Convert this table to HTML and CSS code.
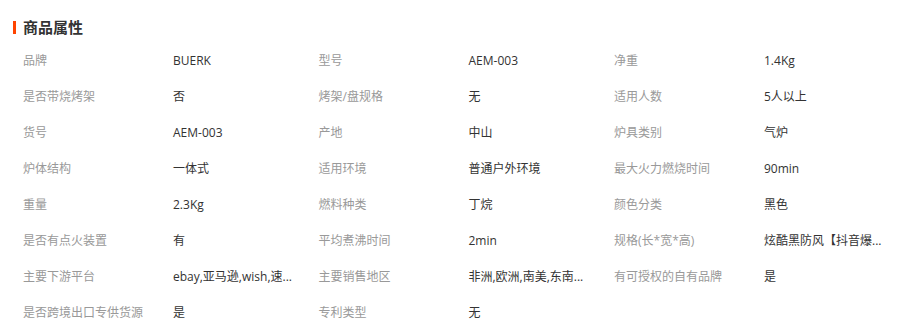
FILE: index.html
```html
<!DOCTYPE html>
<html lang="zh-CN">
<head>
<meta charset="utf-8">
<title>商品属性</title>
<link rel="stylesheet" href="styles.css">
</head>
<body>
<section class="attrs">
  <h2 class="attrs-title"><span class="attrs-bar"></span>商品属性</h2>
  <ul class="attrs-list">
    <li class="attr"><span class="attr-name">品牌</span><span class="attr-value">BUERK</span></li>
    <li class="attr"><span class="attr-name">型号</span><span class="attr-value">AEM-003</span></li>
    <li class="attr"><span class="attr-name">净重</span><span class="attr-value">1.4Kg</span></li>
    <li class="attr"><span class="attr-name">是否带烧烤架</span><span class="attr-value">否</span></li>
    <li class="attr"><span class="attr-name">烤架/盘规格</span><span class="attr-value">无</span></li>
    <li class="attr"><span class="attr-name">适用人数</span><span class="attr-value">5人以上</span></li>
    <li class="attr"><span class="attr-name">货号</span><span class="attr-value">AEM-003</span></li>
    <li class="attr"><span class="attr-name">产地</span><span class="attr-value">中山</span></li>
    <li class="attr"><span class="attr-name">炉具类别</span><span class="attr-value">气炉</span></li>
    <li class="attr"><span class="attr-name">炉体结构</span><span class="attr-value">一体式</span></li>
    <li class="attr"><span class="attr-name">适用环境</span><span class="attr-value">普通户外环境</span></li>
    <li class="attr"><span class="attr-name">最大火力燃烧时间</span><span class="attr-value">90min</span></li>
    <li class="attr"><span class="attr-name">重量</span><span class="attr-value">2.3Kg</span></li>
    <li class="attr"><span class="attr-name">燃料种类</span><span class="attr-value">丁烷</span></li>
    <li class="attr"><span class="attr-name">颜色分类</span><span class="attr-value">黑色</span></li>
    <li class="attr"><span class="attr-name">是否有点火装置</span><span class="attr-value">有</span></li>
    <li class="attr"><span class="attr-name">平均煮沸时间</span><span class="attr-value">2min</span></li>
    <li class="attr"><span class="attr-name">规格(长*宽*高)</span><span class="attr-value">炫酷黑防风【抖音爆...</span></li>
    <li class="attr"><span class="attr-name">主要下游平台</span><span class="attr-value">ebay,亚马逊,wish,速...</span></li>
    <li class="attr"><span class="attr-name">主要销售地区</span><span class="attr-value">非洲,欧洲,南美,东南...</span></li>
    <li class="attr"><span class="attr-name">有可授权的自有品牌</span><span class="attr-value">是</span></li>
    <li class="attr"><span class="attr-name">是否跨境出口专供货源</span><span class="attr-value">是</span></li>
    <li class="attr"><span class="attr-name">专利类型</span><span class="attr-value">无</span></li>
  </ul>
</section>
</body>
</html>
```
FILE: styles.css
```css
html, body {
  margin: 0;
  padding: 0;
  background: #fff;
}
body {
  font-family: "Open Sans", "Noto Sans CJK SC", sans-serif;
  font-size: 12px;
  color: #333;
}
.attrs {
  padding: 17px 0 0 13px;
}
.attrs-title {
  display: flex;
  align-items: center;
  gap: 7px;
  margin: 0;
  height: 20px;
  line-height: 20px;
  font-family: "Noto Sans CJK SC", sans-serif;
  font-size: 15px;
  font-weight: bold;
  color: #333;
}
.attrs-bar {
  width: 3px;
  height: 13px;
  background: #ff4400;
}
.attrs-list {
  list-style: none;
  margin: 6px 0 0;
  padding: 0 0 0 10px;
  display: grid;
  grid-template-columns: repeat(3, 295.5px);
}
.attr {
  display: flex;
  height: 36px;
  line-height: 36px;
}
.attr-name {
  width: 150px;
  flex: none;
  color: #999;
  white-space: nowrap;
}
.attr-value {
  max-width: 140px;
  white-space: nowrap;
  color: #333;
}
```
